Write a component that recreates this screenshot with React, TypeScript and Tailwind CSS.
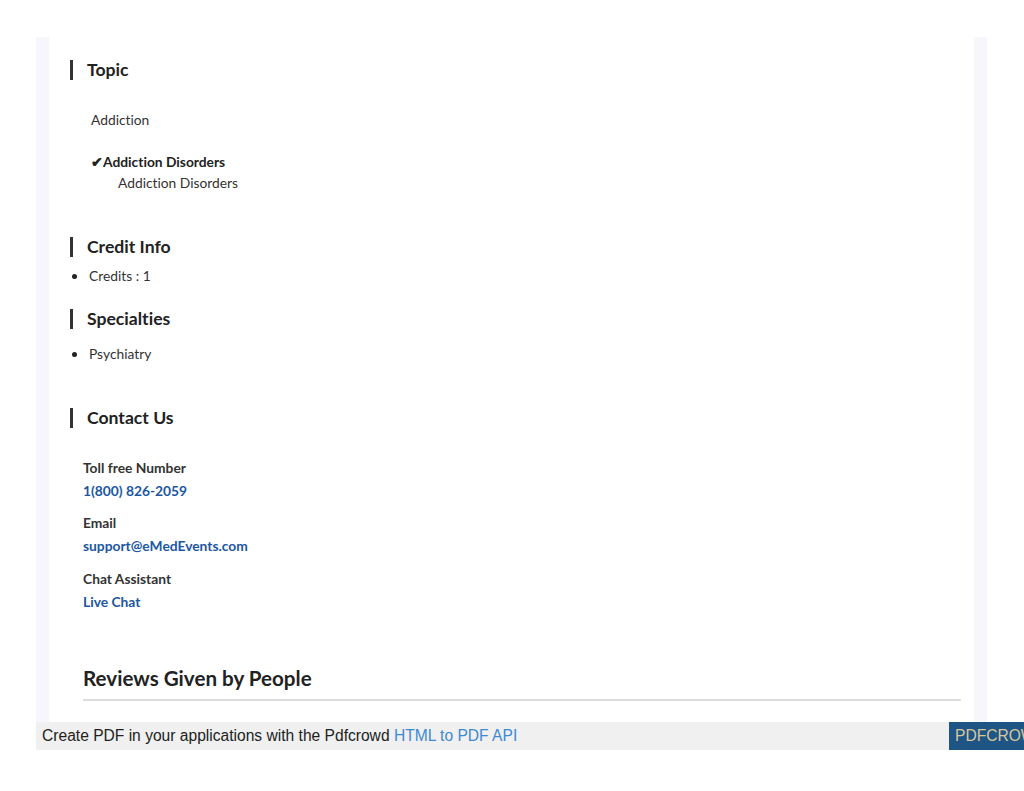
const lato = { fontFamily: "Lato, 'Open Sans', sans-serif" };

function SectionTitle({ title, className = "" }: { title: string; className?: string }) {
  return (
    <div className={`flex items-center h-[20px] ml-[21px] ${className}`}>
      <span className="w-[3px] h-[20px] bg-[#333333]" />
      <h3 className="ml-[14px] text-[17.6px] leading-[20px] font-bold text-[#222222]">{title}</h3>
    </div>
  );
}

function Bullet({ text, className = "" }: { text: string; className?: string }) {
  return (
    <div className={`flex items-center h-[20px] ml-[23px] text-[13.8px] text-[#333333] ${className}`}>
      <span className="w-[5px] h-[5px] rounded-full bg-[#222222]" />
      <span className="ml-[12px]">{text}</span>
    </div>
  );
}

function ContactItem({ label, value, className = "" }: { label: string; value: string; className?: string }) {
  return (
    <div className={`ml-[34px] ${className}`}>
      <div className="h-[20px] leading-[20px] text-[13.8px] font-bold text-[#333333]">{label}</div>
      <a href="#" className="block mt-[3px] h-[20px] leading-[20px] text-[13.8px] font-bold text-[#1b57a3]">
        {value}
      </a>
    </div>
  );
}

export default function App() {
  return (
    <div className="min-h-screen bg-white pt-[37px] [font-variant-ligatures:none]" style={lato}>
      <div className="ml-[36px] w-[951px] bg-[#f6f6fc] px-[13px]">
        <div className="bg-white pt-[23px] pb-[21px]">
          <SectionTitle title="Topic" />
          <div className="ml-[42px] mt-[30px] h-[20px] leading-[20px] text-[13.8px] text-[#333333]">Addiction</div>
          <div className="ml-[42px] mt-[22px] h-[20px] leading-[20px] text-[13.8px] font-bold text-[#222222]">
            ✔Addiction Disorders
          </div>
          <div className="ml-[69px] mt-[1px] h-[20px] leading-[20px] text-[13.8px] text-[#333333]">
            Addiction Disorders
          </div>

          <SectionTitle title="Credit Info" className="mt-[44px]" />
          <Bullet text="Credits : 1" className="mt-[9px]" />

          <SectionTitle title="Specialties" className="mt-[23px]" />
          <Bullet text="Psychiatry" className="mt-[15px]" />

          <SectionTitle title="Contact Us" className="mt-[44px]" />
          <ContactItem label="Toll free Number" value="1(800) 826-2059" className="mt-[30px]" />
          <ContactItem label="Email" value="support@eMedEvents.com" className="mt-[12px]" />
          <ContactItem label="Chat Assistant" value="Live Chat" className="mt-[13px]" />

          <div className="ml-[34px] mr-[13px] mt-[52px]">
            <h2 className="h-[28px] leading-[28px] text-[20.6px] font-bold text-[#222222]">Reviews Given by People</h2>
            <div className="mt-[7px] h-[2px] bg-[#dddddd]" />
          </div>
        </div>
      </div>

      <div
        className="ml-[36px] flex h-[28px] items-center bg-[#f0f0f0] text-[15.6px]"
        style={{ fontFamily: "'Liberation Sans', Arial, sans-serif" }}
      >
        <div className="flex-1 pl-[6px] text-[#222222]">
          Create PDF in your applications with the Pdfcrowd{" "}
          <a href="#" className="text-[#3e8ad0]">HTML to PDF API</a>
        </div>
        <div className="flex h-[28px] w-[75px] shrink-0 items-center overflow-hidden whitespace-nowrap bg-[#1f5584] pl-[6px] text-[#d8c79c]">
          PDFCROWD
        </div>
      </div>
    </div>
  );
}
